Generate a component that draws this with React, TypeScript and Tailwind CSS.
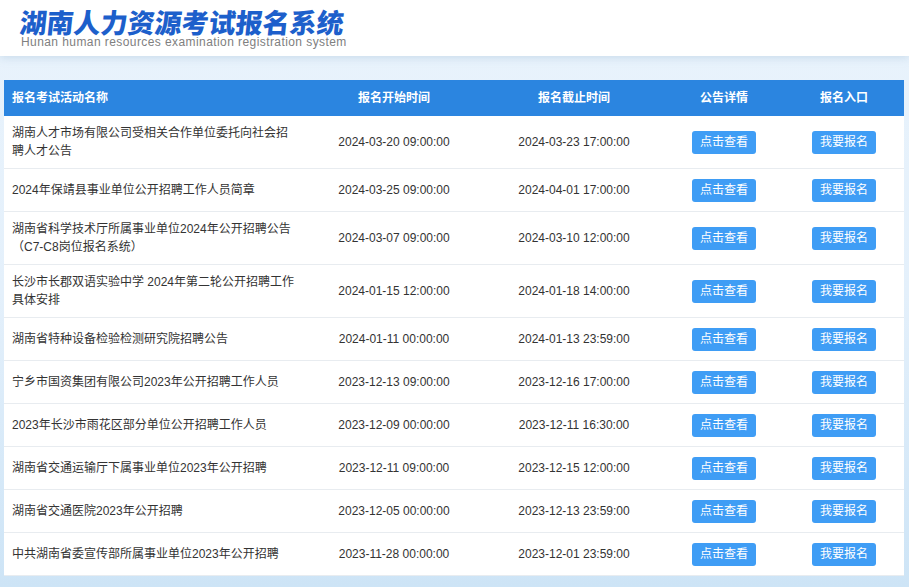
import React from "react";

const rows = [
  {
    name: "湖南人才市场有限公司受相关合作单位委托向社会招聘人才公告",
    start: "2024-03-20 09:00:00",
    end: "2024-03-23 17:00:00",
  },
  { name: "2024年保靖县事业单位公开招聘工作人员简章", start: "2024-03-25 09:00:00", end: "2024-04-01 17:00:00" },
  {
    name: "湖南省科学技术厅所属事业单位2024年公开招聘公告（C7-C8岗位报名系统）",
    start: "2024-03-07 09:00:00",
    end: "2024-03-10 12:00:00",
  },
  {
    name: "长沙市长郡双语实验中学 2024年第二轮公开招聘工作具体安排",
    start: "2024-01-15 12:00:00",
    end: "2024-01-18 14:00:00",
  },
  { name: "湖南省特种设备检验检测研究院招聘公告", start: "2024-01-11 00:00:00", end: "2024-01-13 23:59:00" },
  { name: "宁乡市国资集团有限公司2023年公开招聘工作人员", start: "2023-12-13 09:00:00", end: "2023-12-16 17:00:00" },
  { name: "2023年长沙市雨花区部分单位公开招聘工作人员", start: "2023-12-09 00:00:00", end: "2023-12-11 16:30:00" },
  { name: "湖南省交通运输厅下属事业单位2023年公开招聘", start: "2023-12-11 09:00:00", end: "2023-12-15 12:00:00" },
  { name: "湖南省交通医院2023年公开招聘", start: "2023-12-05 00:00:00", end: "2023-12-13 23:59:00" },
  { name: "中共湖南省委宣传部所属事业单位2023年公开招聘", start: "2023-11-28 00:00:00", end: "2023-12-01 23:59:00" },
];

function Btn({ label }: { label: string }) {
  return (
    <span className="inline-flex items-center justify-center w-[64px] h-[23px] rounded-[3px] bg-[#3f9df5] text-white text-[12px]">
      {label}
    </span>
  );
}

export default function App() {
  return (
    <div
      className="w-[909px] h-[587px] overflow-hidden bg-gradient-to-b from-[#e9f3fc] via-[#e4f0fb] to-[#cde4f6]"
      style={{ fontFamily: '"Liberation Sans", "Noto Sans CJK SC", sans-serif' }}
    >
      <div className="h-[56px] bg-white pl-[20px] pt-[8px] shadow-[0_2px_8px_rgba(150,180,210,0.35)]">
        <div
          className="text-[27px] leading-[27px] font-black text-[#1d5fcb] -skew-x-6"
          style={{ fontFamily: '"Noto Sans CJK SC", sans-serif' }}
        >
          湖南人力资源考试报名系统
        </div>
        <div className="mt-[1px] text-[12px] leading-[13px] text-[#808080] tracking-[0.42px] ml-[1px]">
          Hunan human resources examination registration system
        </div>
      </div>

      <div className="mt-[24px] ml-[4px] w-[900px] bg-white">
        <table className="w-full border-collapse table-fixed">
          <colgroup>
            <col className="w-[300px]" />
            <col className="w-[180px]" />
            <col className="w-[180px]" />
            <col className="w-[120px]" />
            <col className="w-[120px]" />
          </colgroup>
          <thead>
            <tr className="bg-[#2b85e0] text-white text-[12px] font-bold h-[36px]">
              <th className="text-left pl-[8px]">报名考试活动名称</th>
              <th>报名开始时间</th>
              <th>报名截止时间</th>
              <th>公告详情</th>
              <th>报名入口</th>
            </tr>
          </thead>
          <tbody>
            {rows.map((r, i) => (
              <tr key={i} className="h-[43px] border-b border-[#e8ecf0] text-[12px] text-[#333]">
                <td className="pl-[8px] pr-[6px] py-[8px] leading-[18px]">{r.name}</td>
                <td className="text-center">{r.start}</td>
                <td className="text-center">{r.end}</td>
                <td className="text-center">
                  <Btn label="点击查看" />
                </td>
                <td className="text-center">
                  <Btn label="我要报名" />
                </td>
              </tr>
            ))}
          </tbody>
        </table>
      </div>
    </div>
  );
}
